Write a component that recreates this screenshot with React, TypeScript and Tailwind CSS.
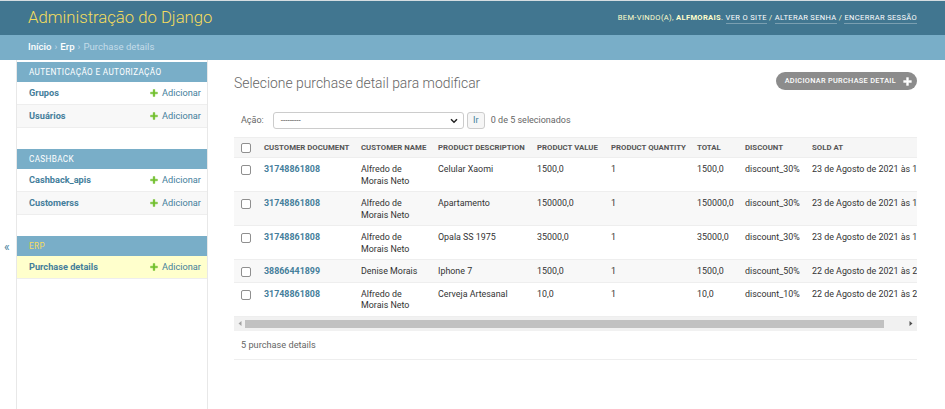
import React from "react";

function PlusIcon({ color = "#70bf2b", size = 8 }: { color?: string; size?: number }) {
  return (
    <svg width={size} height={size} viewBox="0 0 12 12" className="shrink-0">
      <path
        d="M4.7 0.8h2.6v3.9h3.9v2.6h-3.9v3.9h-2.6v-3.9h-3.9v-2.6h3.9z"
        fill={color}
        stroke={color}
        strokeWidth="0.6"
        strokeLinejoin="round"
      />
    </svg>
  );
}

function Checkbox() {
  return <div className="w-[10px] h-[10px] rounded-[2px] border border-[#8f8f8f] bg-white" />;
}

type ModRow = { name: string };

function Module({ title, rows, current }: { title: string; rows: ModRow[]; current?: boolean }) {
  return (
    <div className="mb-[21px]">
      <div
        className={`h-[20px] bg-[#79aec8] pl-[12px] flex items-center text-[8.2px] tracking-[0.35px] ${
          current ? "text-[#f5dd5d]" : "text-white"
        }`}
      >
        {title}
      </div>
      {rows.map((r, i) => (
        <div
          key={r.name}
          className={`h-[23px] flex items-center justify-between pl-[12px] pr-[6px] border-b border-[#eeeeee] ${
            current ? "bg-[#ffffcc]" : i % 2 === 1 ? "bg-[#f8f8f8]" : "bg-white"
          }`}
        >
          <span className="text-[9.2px] font-bold text-[#447e9b]">{r.name}</span>
          <span className="flex items-center gap-[4px] text-[9.2px] text-[#447e9b]">
            <PlusIcon />
            Adicionar
          </span>
        </div>
      ))}
    </div>
  );
}

const rows = [
  { doc: "31748861808", name: ["Alfredo de", "Morais Neto"], desc: "Celular Xaomi", value: "1500,0", qty: "1", total: "1500,0", discount: "discount_30%", sold: "23 de Agosto de 2021 às 16:32" },
  { doc: "31748861808", name: ["Alfredo de", "Morais Neto"], desc: "Apartamento", value: "150000,0", qty: "1", total: "150000,0", discount: "discount_30%", sold: "23 de Agosto de 2021 às 16:30" },
  { doc: "31748861808", name: ["Alfredo de", "Morais Neto"], desc: "Opala SS 1975", value: "35000,0", qty: "1", total: "35000,0", discount: "discount_30%", sold: "23 de Agosto de 2021 às 16:28" },
  { doc: "38866441899", name: ["Denise Morais"], desc: "Iphone 7", value: "1500,0", qty: "1", total: "1500,0", discount: "discount_50%", sold: "22 de Agosto de 2021 às 21:15" },
  { doc: "31748861808", name: ["Alfredo de", "Morais Neto"], desc: "Cerveja Artesanal", value: "10,0", qty: "1", total: "10,0", discount: "discount_10%", sold: "22 de Agosto de 2021 às 20:10" },
];

const heads = [
  "CUSTOMER DOCUMENT",
  "CUSTOMER NAME",
  "PRODUCT DESCRIPTION",
  "PRODUCT VALUE",
  "PRODUCT QUANTITY",
  "TOTAL",
  "DISCOUNT",
  "SOLD AT",
];

const td = "pl-[7px] pt-[6px] pb-[4px] align-top text-[8.9px] leading-[11.5px]";

export default function App() {
  return (
    <div className="w-[945px] h-[409px] overflow-hidden bg-white font-[Roboto,'Liberation_Sans',sans-serif] text-[#333] flex flex-col">
      <div className="h-[1px] bg-[#d5dde1]" />
      {/* Header */}
      <div className="h-[34px] bg-[#417690] flex items-center justify-between pl-[28px] pr-[28px] shrink-0">
        <div className="text-[16.7px] font-light text-[#f5dd5d] leading-none">Administração do Django</div>
        <div className="text-[7.55px] tracking-[0.34px] text-[#ffffcc] uppercase flex items-center">
          <span>Bem-vindo(a),&nbsp;</span>
          <strong className="font-bold text-[#ffffcc]">alfmorais</strong>
          <span>.&nbsp;</span>
          <span className="text-white border-b border-[rgba(255,255,255,0.3)]">Ver o site</span>
          <span>&nbsp;/&nbsp;</span>
          <span className="text-white border-b border-[rgba(255,255,255,0.3)]">Alterar senha</span>
          <span>&nbsp;/&nbsp;</span>
          <span className="text-white border-b border-[rgba(255,255,255,0.3)]">Encerrar sessão</span>
        </div>
      </div>
      {/* Breadcrumbs */}
      <div className="h-[25px] bg-[#79aec8] flex items-center pl-[28px] text-[9.6px] text-[#c4dce8] shrink-0">
        <span className="text-white font-medium">Início</span>
        <span className="mx-[3px]">›</span>
        <span className="text-white font-medium">Erp</span>
        <span className="mx-[3px]">›</span>
        <span>Purchase details</span>
      </div>
      {/* Main */}
      <div className="flex flex-1 min-h-0">
        <div className="w-[17px] shrink-0 border-r border-[#e8e8e8] pt-[178px] pl-[4px] text-[12px] text-[#447e9b]">«</div>
        <div className="w-[191px] shrink-0 border-r border-[#e8e8e8] pt-[2px]">
          <Module title="AUTENTICAÇÃO E AUTORIZAÇÃO" rows={[{ name: "Grupos" }, { name: "Usuários" }]} />
          <Module title="CASHBACK" rows={[{ name: "Cashback_apis" }, { name: "Customerss" }]} />
          <Module title="ERP" rows={[{ name: "Purchase details" }]} current />
        </div>
        <div className="flex-1 min-w-0 pl-[26px] pr-[28px] pt-[12px]">
          <div className="flex items-start justify-between h-[18px]">
            <h1 className="text-[13.9px] font-light text-[#666] leading-[18px] mt-[2px]">
              Selecione purchase detail para modificar
            </h1>
            <div className="h-[18px] rounded-full bg-[#8c8c8c] pl-[9px] pr-[5px] flex items-center gap-[7px] text-[7.35px] tracking-[0.3px] font-medium text-white">
              ADICIONAR PURCHASE DETAIL
              <PlusIcon color="#ffffff" size={9} />
            </div>
          </div>
          {/* actions */}
          <div className="mt-[22px] h-[17px] flex items-center pl-[7px] text-[9px] text-[#666]">
            <span>Ação:</span>
            <div className="ml-[9px] w-[191px] h-[17px] border border-[#cccccc] rounded-[3px] bg-white flex items-center justify-between pl-[7px] pr-[5px]">
              <span className="text-[#333] text-[8px] leading-none">---------</span>
              <svg width="8" height="6" viewBox="0 0 8 6">
                <path d="M1 1.2l3 3 3-3" fill="none" stroke="#222" strokeWidth="1.5" />
              </svg>
            </div>
            <div className="ml-[3px] w-[18px] h-[17px] border border-[#cccccc] rounded-[3px] bg-[#f6f6f6] flex items-center justify-center text-[#447e9b] text-[9px]">
              Ir
            </div>
            <span className="ml-[6px]">0 de 5 selecionados</span>
          </div>
          {/* table */}
          <div className="mt-[8px] overflow-hidden">
            <table className="table-fixed border-collapse w-[780px] text-left">
              <colgroup>
                <col className="w-[23px]" />
                <col className="w-[97px]" />
                <col className="w-[77px]" />
                <col className="w-[99px]" />
                <col className="w-[74px]" />
                <col className="w-[86px]" />
                <col className="w-[48px]" />
                <col className="w-[67px]" />
                <col className="w-[209px]" />
              </colgroup>
              <thead>
                <tr className="bg-[#f6f6f6] h-[20px] border-t border-b border-[#eeeeee]">
                  <th className="pl-[7px] align-middle">
                    <Checkbox />
                  </th>
                  {heads.map((h) => (
                    <th key={h} className="pl-[7px] text-[7.8px] font-bold text-[#555] whitespace-nowrap align-middle">
                      {h}
                    </th>
                  ))}
                </tr>
              </thead>
              <tbody>
                {rows.map((r, i) => (
                  <tr key={i} className={`border-b border-[#eeeeee] ${i % 2 === 1 ? "bg-[#f8f8f8]" : "bg-white"}`}>
                    <td className="pl-[7px] pt-[7px] pb-[4px] align-top">
                      <Checkbox />
                    </td>
                    <td className={`${td} font-bold text-[#447e9b]`}>{r.doc}</td>
                    <td className={td}>
                      {r.name.map((n) => (
                        <div key={n}>{n}</div>
                      ))}
                    </td>
                    <td className={td}>{r.desc}</td>
                    <td className={td}>{r.value}</td>
                    <td className={td}>{r.qty}</td>
                    <td className={td}>{r.total}</td>
                    <td className={`${td} whitespace-nowrap`}>{r.discount}</td>
                    <td className={`${td} whitespace-nowrap`}>{r.sold}</td>
                  </tr>
                ))}
              </tbody>
            </table>
          </div>
          {/* fake horizontal scrollbar */}
          <div className="h-[14px] bg-[#f1f1f1] flex items-center">
            <div className="w-[11px] flex justify-center">
              <svg width="4" height="5" viewBox="0 0 4 5">
                <path d="M3.5 0v5L0.5 2.5z" fill="#a3a3a3" />
              </svg>
            </div>
            <div className="w-[639px] h-[8px] bg-[#c1c1c1]" />
            <div className="flex-1 flex justify-end pr-[4px]">
              <svg width="4" height="5" viewBox="0 0 4 5">
                <path d="M0.5 0v5L3.5 2.5z" fill="#505050" />
              </svg>
            </div>
          </div>
          <div className="h-[29px] border-b border-[#eeeeee] flex items-center pl-[7px] text-[9.2px] text-[#666]">
            5 purchase details
          </div>
        </div>
      </div>
    </div>
  );
}
